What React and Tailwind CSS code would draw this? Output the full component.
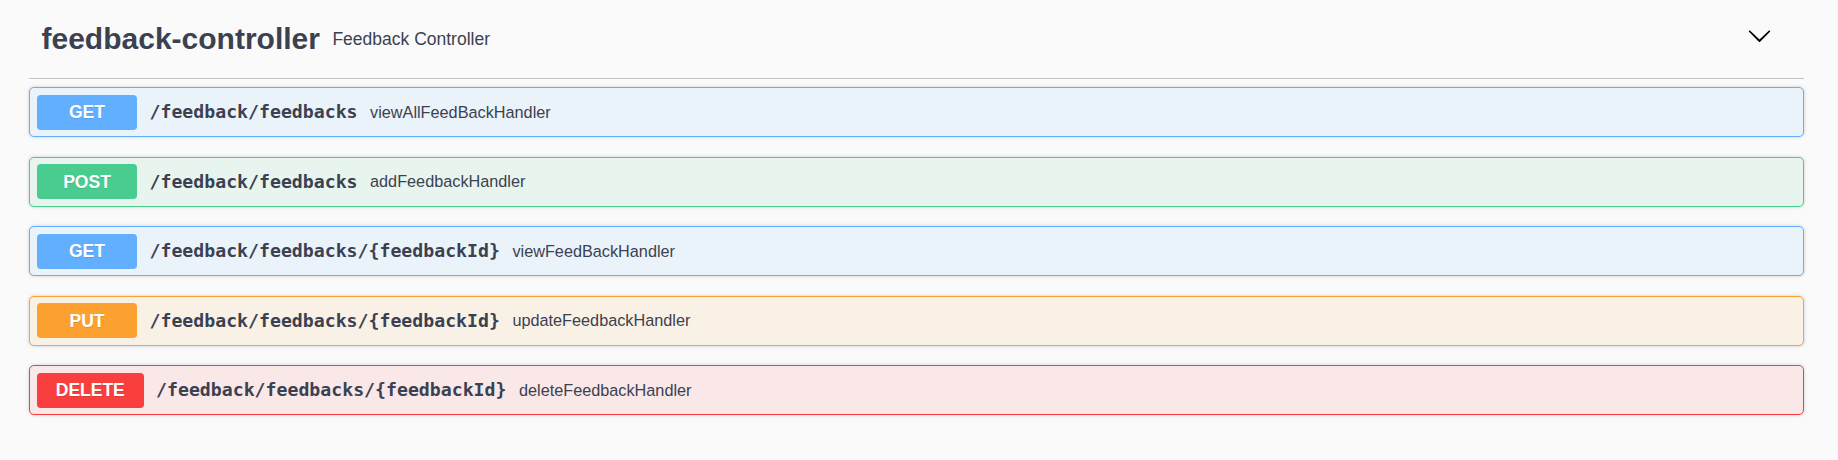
const operations = [
  {
    method: "GET",
    path: "/feedback/feedbacks",
    summary: "viewAllFeedBackHandler",
    box: "border-[#61affe] bg-[#ebf3fa]",
    badge: "bg-[#61affe]",
  },
  {
    method: "POST",
    path: "/feedback/feedbacks",
    summary: "addFeedbackHandler",
    box: "border-[#49cc90] bg-[#e8f5ef]",
    badge: "bg-[#49cc90]",
  },
  {
    method: "GET",
    path: "/feedback/feedbacks/{feedbackId}",
    summary: "viewFeedBackHandler",
    box: "border-[#61affe] bg-[#ebf3fa]",
    badge: "bg-[#61affe]",
  },
  {
    method: "PUT",
    path: "/feedback/feedbacks/{feedbackId}",
    summary: "updateFeedbackHandler",
    box: "border-[#fca130] bg-[#faf1e6]",
    badge: "bg-[#fca130]",
  },
  {
    method: "DELETE",
    path: "/feedback/feedbacks/{feedbackId}",
    summary: "deleteFeedbackHandler",
    box: "border-[#f93e3e] bg-[#fae7e7]",
    badge: "bg-[#f93e3e]",
  },
];

export default function App() {
  return (
    <div className="min-h-screen bg-[#fafafa] font-['Liberation_Sans',Arial,sans-serif] text-[#3b4151]">
      <div className="ml-[29px] w-[1775px]">
        {/* tag header */}
        <div className="flex h-[79px] items-center border-b border-[#c1c3c7] pl-[12.5px] pr-[32px]">
          <h3 className="text-[30px] font-bold leading-[34.5px]">feedback-controller</h3>
          <small className="px-[12.5px] text-[17.5px] leading-[20px]">Feedback Controller</small>
          <div className="flex-1" />
          <svg className="mb-[7px] h-[25px] w-[25px] text-black" viewBox="0 0 20 20" fill="currentColor">
            <path d="M17.418 6.109c.272-.268.709-.268.979 0s.271.701 0 .969l-7.908 7.83c-.27.268-.707.268-.979 0l-7.908-7.83c-.27-.268-.27-.701 0-.969.271-.268.709-.268.979 0L10 13.25l7.418-7.141z" />
          </svg>
        </div>

        <div className="mt-[8px] flex flex-col gap-[19.5px]">
          {operations.map((op, i) => (
            <div
              key={i}
              className={`flex h-[50px] items-center rounded-[5px] border px-[7px] shadow-[0_0_3.75px_rgba(0,0,0,0.19)] ${op.box}`}
            >
              <span
                className={`min-w-[100px] rounded-[3.75px] px-[18.75px] py-[7.5px] text-center text-[17.5px] font-bold leading-[20px] text-white [text-shadow:0_1.25px_0_rgba(0,0,0,0.1)] ${op.badge}`}
              >
                {op.method}
              </span>
              <span className="px-[12.5px] font-['DejaVu_Sans_Mono',monospace] text-[18.2px] font-bold">
                {op.path}
              </span>
              <span className="text-[16.25px]">{op.summary}</span>
            </div>
          ))}
        </div>
      </div>
    </div>
  );
}
